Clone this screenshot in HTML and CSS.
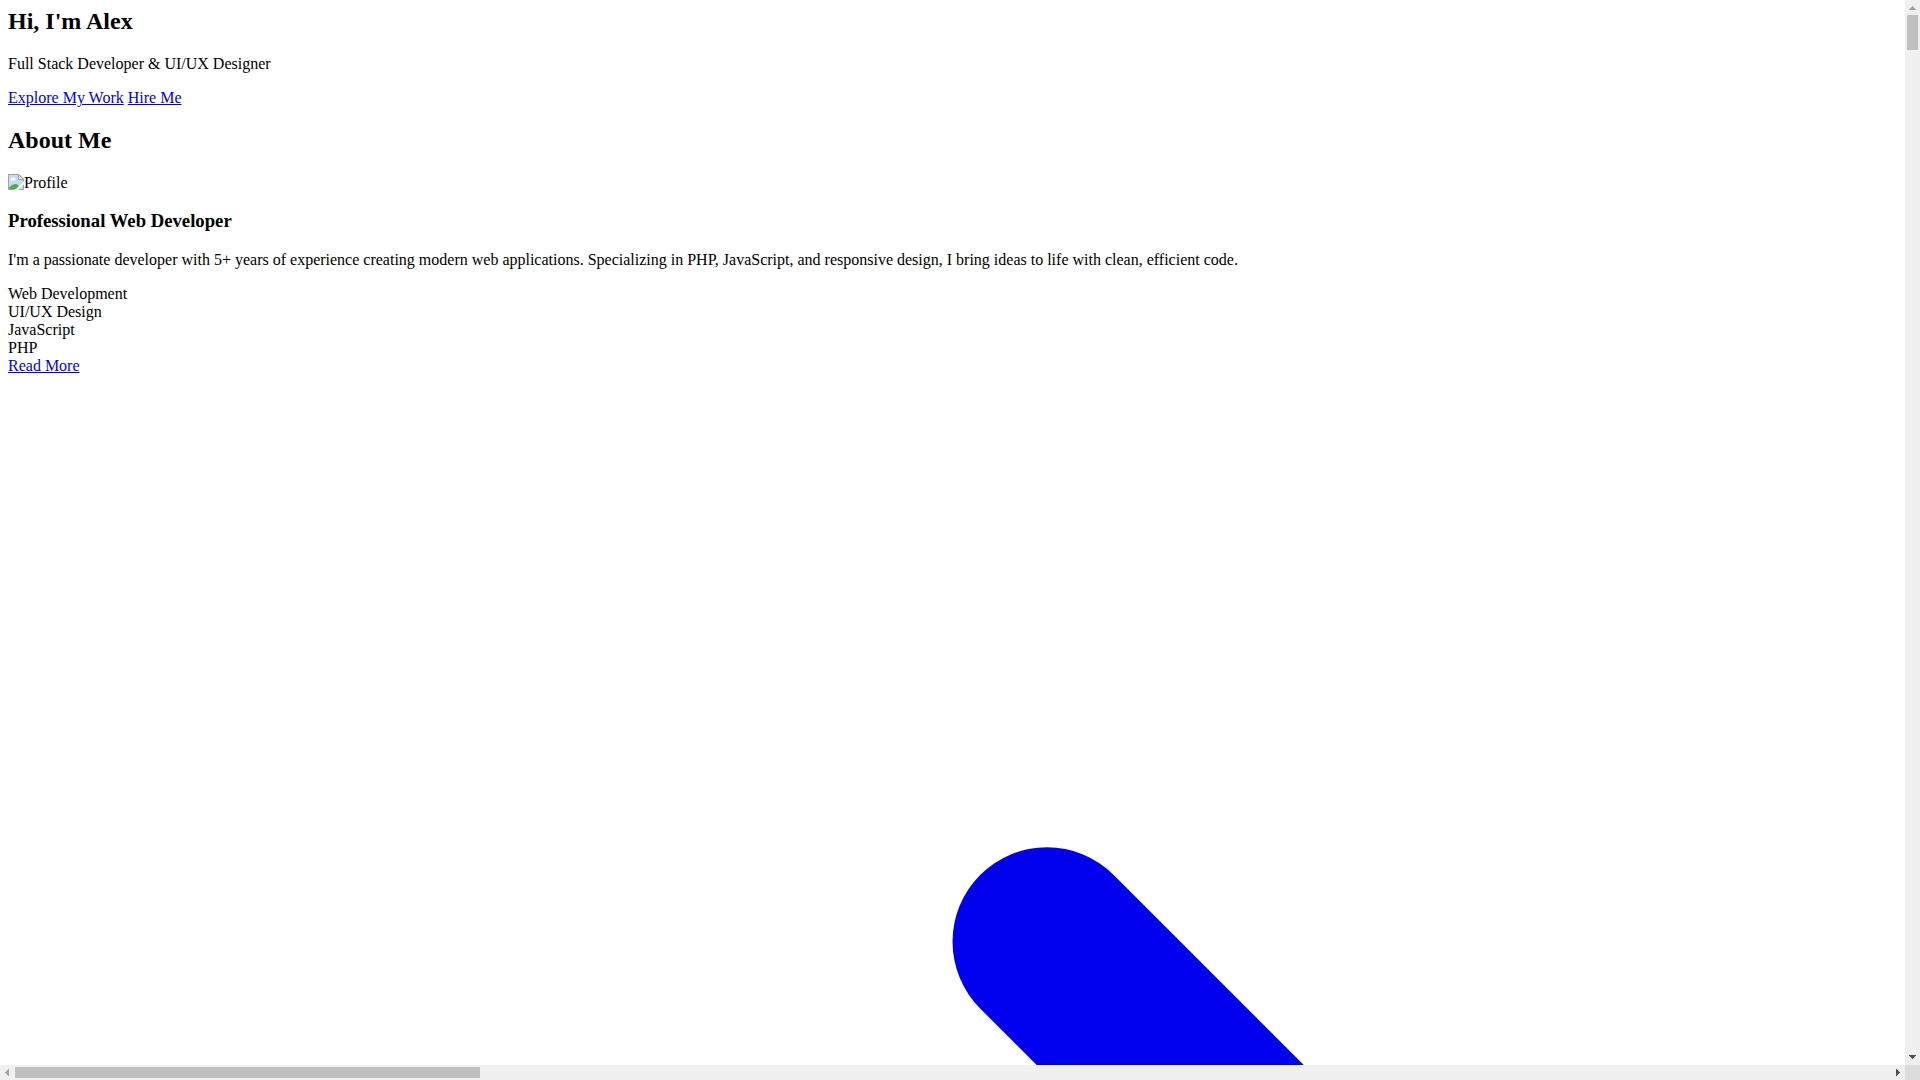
FILE: index.html
```html
<!DOCTYPE html>
<html lang="en">
<head>
<meta charset="utf-8">
<title>Alex - Portfolio</title>
<link rel="stylesheet" href="styles.css">
</head>
<body>
<main class="viewport">
  <section class="hero">
    <h2 class="hero-title">Hi, I'm Alex</h2>
    <p>Full Stack Developer &amp; UI/UX Designer</p>
    <div>
      <a href="#work">Explore My Work</a>
      <a href="#contact">Hire Me</a>
    </div>
  </section>
  <section class="about">
    <h2>About Me</h2>
    <div class="profile">
      <svg class="profile-icon" viewBox="0 0 16 16" aria-hidden="true">
        <path d="M.5 .5H11L15.500 5V15.500H.5z" fill="#c6dafb"/>
        <path d="M2.500 5.500a1.500 1.500 0 0 1 1.500-1.500 2 2 0 0 1 3 .5 1 1 0 0 1 0 2H3a1 1 0 0 1-.5-1z" fill="#fff"/>
        <path d="M1 15v-1.500Q4 10 7 10t4 2l-3 3z" fill="#54ad3b"/>
        <path d="M7 16L16 7.500V10L10 16z" fill="#fff"/>
        <path d="M6.500 15.500H.5V.5H11L15.500 5V7.500M15.500 11V15.500H11" fill="none" stroke="#a0a0a0"/>
        <path d="M10.500 .5V5.500H15.500z" fill="#f4f4f4" stroke="#a0a0a0"/>
      </svg><span>Profile</span>
    </div>
    <h3>Professional Web Developer</h3>
    <p>I'm a passionate developer with 5+ years of experience creating modern web applications. Specializing in PHP, JavaScript, and responsive design, I bring ideas to life with clean, efficient code.</p>
    <div>
      <div>Web Development</div>
      <div>UI/UX Design</div>
      <div>JavaScript</div>
      <div>PHP</div>
    </div>
    <a href="#more">Read More
      <svg class="arrow" viewBox="0 0 20 20" fill="currentColor" aria-hidden="true">
        <path d="M10.293 5.293a1 1 0 011.414 0l4 4a1 1 0 010 1.414l-4 4a1 1 0 01-1.414-1.414L13.586 10l-3.293-3.293a1 1 0 010-1.414z"/>
      </svg>
    </a>
  </section>
</main>
<div class="bar bar-vertical" aria-hidden="true">
  <svg class="bar-arrow bar-arrow-off" viewBox="0 0 15 15"><path d="M4 10V9H5V8H6V7H7V6H8V7H9V8H10V9H11V10z"/></svg>
  <div class="bar-track"><div class="thumb"></div></div>
  <svg class="bar-arrow" viewBox="0 0 15 15"><path d="M4 5V6H5V7H6V8H7V9H8V8H9V7H10V6H11V5z"/></svg>
</div>
<div class="bar bar-horizontal" aria-hidden="true">
  <svg class="bar-arrow bar-arrow-off" viewBox="0 0 15 15"><path d="M9 4H8V5H7V6H6V7H5V8H6V9H7V10H8V11H9z"/></svg>
  <div class="bar-track"><div class="thumb"></div></div>
  <svg class="bar-arrow" viewBox="0 0 15 15"><path d="M6 4H7V5H8V6H9V7H10V8H9V9H8V10H7V11H6z"/></svg>
</div>
<div class="corner"></div>
</body>
</html>
```
FILE: styles.css
```css
body {
  margin: 0;
  height: 100vh;
  overflow: hidden;
  display: grid;
  grid-template-columns: minmax(0, 1fr) 15px;
  grid-template-rows: minmax(0, 1fr) 15px;
  background: #fff;
  color: #000;
  font-family: "Liberation Serif", "Times New Roman", serif;
  font-size: 16px;
}

.viewport {
  padding: 8px;
  overflow: hidden;
}

.viewport a {
  color: #0000ee;
}

.hero-title {
  margin-top: 0;
}

.profile {
  display: flex;
}

.profile-icon {
  width: 16px;
  height: 16px;
}

.arrow {
  display: block;
  width: 100%;
}

/* Scroll bars along the right and bottom edges */
.bar {
  display: flex;
  background: #f0f0f0;
}

.bar-vertical {
  flex-direction: column;
}

.bar-track {
  flex: 1;
  box-sizing: border-box;
}

.bar-vertical .bar-track {
  padding: 0 2px;
}

.bar-horizontal .bar-track {
  padding: 2px 0;
}

.thumb {
  background: #c0c0c0;
}

.bar-vertical .thumb {
  height: 35px;
}

.bar-horizontal .thumb {
  width: 24.8%;
  height: 100%;
}

.bar-arrow {
  flex: none;
  width: 15px;
  height: 15px;
  fill: #505050;
}

.bar-arrow-off {
  fill: #a3a3a3;
}

.corner {
  background: #dcdcdc;
}
```
